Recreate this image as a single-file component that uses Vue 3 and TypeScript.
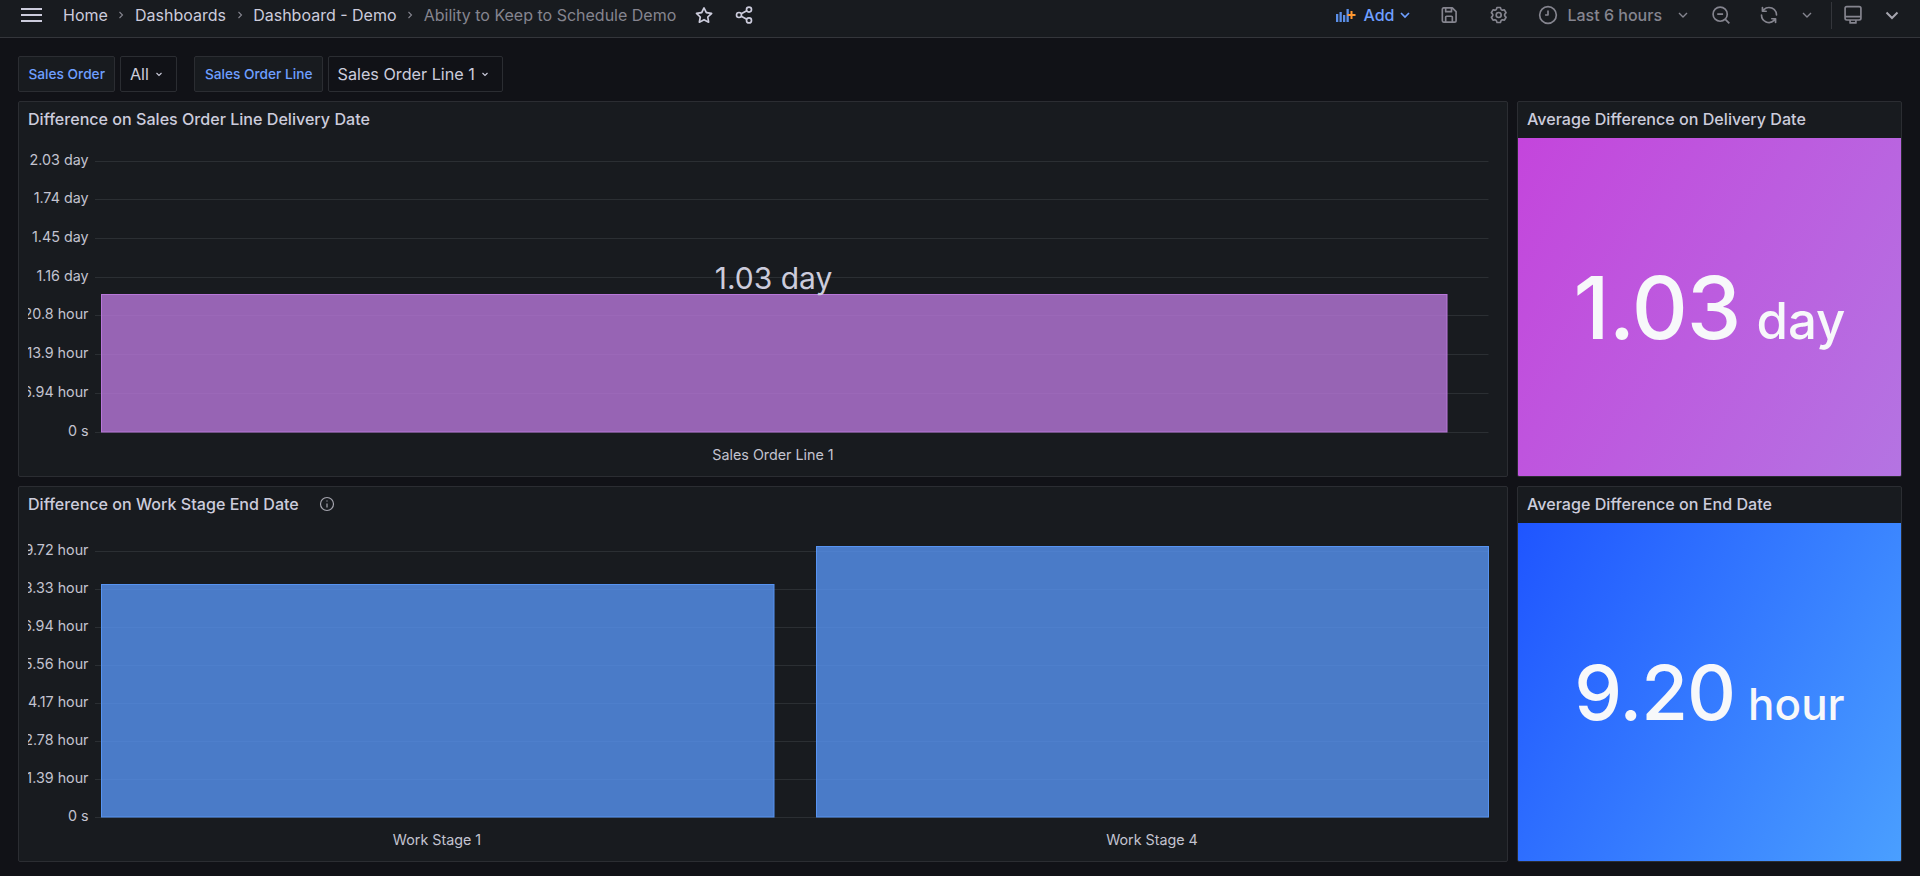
<script setup lang="ts">
interface Bar { x1: number; x2: number; top: number; label: string; center: number }
interface Chart {
  id: string; title: string; info: boolean; stroke: string; fill: string;
  top: number; ticks: { y: number; label: string }[]; bars: Bar[]; value?: string; labelY: number;
}
interface Stat { title: string; value: string; unit: string; cls: string }

const chart1: Chart = {
  id: 'clip-a', title: 'Difference on Sales Order Line Delivery Date', info: false,
  stroke: '#b877d9', fill: 'rgba(184,119,217,0.8)', top: 101, labelY: 455, value: '1.03 day',
  ticks: [
    { y: 161.5, label: '2.03 day' }, { y: 199.5, label: '1.74 day' }, { y: 238.5, label: '1.45 day' },
    { y: 277.5, label: '1.16 day' }, { y: 315.5, label: '20.8 hour' }, { y: 354.5, label: '13.9 hour' },
    { y: 393.5, label: '6.94 hour' }, { y: 432.5, label: '0 s' },
  ],
  bars: [{ x1: 101, x2: 1447.5, top: 294, label: 'Sales Order Line 1', center: 773 }],
};
const chart2: Chart = {
  id: 'clip-b', title: 'Difference on Work Stage End Date', info: true,
  stroke: '#5794f2', fill: 'rgba(87,148,242,0.8)', top: 486, labelY: 840,
  ticks: [
    { y: 551.5, label: '9.72 hour' }, { y: 589.5, label: '8.33 hour' }, { y: 627.5, label: '6.94 hour' },
    { y: 665.5, label: '5.56 hour' }, { y: 703.5, label: '4.17 hour' }, { y: 741.5, label: '2.78 hour' },
    { y: 779.5, label: '1.39 hour' }, { y: 817.5, label: '0 s' },
  ],
  bars: [
    { x1: 101, x2: 774.5, top: 584, label: 'Work Stage 1', center: 437 },
    { x1: 816, x2: 1489, top: 546, label: 'Work Stage 4', center: 1152 },
  ],
};
const rows: { chart: Chart; stat: Stat }[] = [
  { chart: chart1, stat: { title: 'Average Difference on Delivery Date', value: '1.03', unit: 'day', cls: 'purple' } },
  { chart: chart2, stat: { title: 'Average Difference on End Date', value: '9.20', unit: 'hour', cls: 'blue' } },
];
const originX = 19;
const originY = (c: Chart) => c.top + 37;
const plotHeight = 339;
const plotWidth = 1488;
</script>

<template>
  <div class="page">
    <header class="topbar">
      <div class="crumbs">
        <svg class="burger" viewBox="0 0 23 16" width="23" height="16"><path d="M1 2h21M1 8h21M1 14h21" /></svg>
        <span class="crumb first">Home</span>
        <svg class="sep" viewBox="0 0 10 10" width="10" height="10"><path d="M3.5 2 6.5 5 3.5 8" /></svg>
        <span class="crumb">Dashboards</span>
        <svg class="sep" viewBox="0 0 10 10" width="10" height="10"><path d="M3.5 2 6.5 5 3.5 8" /></svg>
        <span class="crumb">Dashboard - Demo</span>
        <svg class="sep" viewBox="0 0 10 10" width="10" height="10"><path d="M3.5 2 6.5 5 3.5 8" /></svg>
        <span class="crumb last">Ability to Keep to Schedule Demo</span>
        <svg class="icon star" viewBox="0 0 24 24" width="20" height="20"><path class="solid" d="M22,9.67A1,1,0,0,0,21.14,9l-5.69-.83L12.9,3a1,1,0,0,0-1.8,0L8.55,8.16,2.86,9a1,1,0,0,0-.81.68,1,1,0,0,0,.25,1L6.43,14.69l-1,5.73A1,1,0,0,0,6.88,21.5L12,18.81l5.1,2.68a.93.93,0,0,0,.46.12,1,1,0,0,0,.59-.19,1,1,0,0,0,.4-1l-1-5.73L22,10.69A1,1,0,0,0,22,9.67Zm-6.15,4a1,1,0,0,0-.29.88l.72,4.2-3.76-2a1.06,1.06,0,0,0-.94,0l-3.76,2,.72-4.2a1,1,0,0,0-.29-.88l-3-3,4.21-.61a1,1,0,0,0,.76-.55L12,5.7l1.88,3.82a1,1,0,0,0,.76.55l4.21.61Z" /></svg>
        <svg class="icon share" viewBox="0 0 24 24" width="20" height="20"><circle cx="6" cy="12" r="3" /><circle cx="18" cy="5.5" r="3" /><circle cx="18" cy="18.5" r="3" /><path d="M8.7 10.6 15.3 7M8.7 13.4l6.6 3.6" /></svg>
      </div>
      <div class="actions">
        <svg class="ic-add" viewBox="0 0 20 16" width="20" height="16">
          <path class="bars" d="M0 7h2.300v8H0zM3.500 5h2.300v10H3.500zM7 8h2.300v7H7zM10.500 2h2.300v13h-2.300z" />
          <path class="plus" d="M15.500 4v8M11.500 8h8" />
        </svg>
        <span class="add">Add</span>
        <svg class="chev blue-chev" viewBox="0 0 14 14" width="14" height="14"><path d="M3 5l4 4 4-4" /></svg>
        <svg class="icon muted m27" viewBox="0 0 24 24" width="20" height="20"><path d="M4 5a1.500 1.500 0 0 1 1.500-1.500H16L20.500 8v10.500a2 2 0 0 1-2 2h-13A1.500 1.500 0 0 1 4 19ZM8 3.500V8h7V3.500M8 20.500V14.500a1 1 0 0 1 1-1h6a1 1 0 0 1 1 1v6" /></svg>
        <svg class="icon mutedfill m30" viewBox="0 0 24 24" width="20" height="20"><path d="M19.9,12.66a1,1,0,0,1,0-1.32L21.18,9.9a1,1,0,0,0,.12-1.17l-2-3.46a1,1,0,0,0-1.07-.48l-1.88.38a1,1,0,0,1-1.15-.66l-.61-1.83A1,1,0,0,0,13.64,2h-4a1,1,0,0,0-1,.68L8.08,4.51a1,1,0,0,1-1.15.66L5,4.79A1,1,0,0,0,4,5.27L2,8.73A1,1,0,0,0,2.1,9.9l1.27,1.44a1,1,0,0,1,0,1.32L2.1,14.1A1,1,0,0,0,2,15.27l2,3.46a1,1,0,0,0,1.07.48l1.88-.38a1,1,0,0,1,1.15.66l.61,1.83a1,1,0,0,0,1,.68h4a1,1,0,0,0,.95-.68l.61-1.83a1,1,0,0,1,1.15-.66l1.88.38a1,1,0,0,0,1.07-.48l2-3.46a1,1,0,0,0-.12-1.17ZM18.41,14l.8.9-1.28,2.22-1.18-.24a3,3,0,0,0-3.45,2L12.92,20H10.36L10,18.86a3,3,0,0,0-3.45-2l-1.18.24L4.07,14.9l.8-.9a3,3,0,0,0,0-4l-.8-.9L5.35,6.89l1.18.24a3,3,0,0,0,3.45-2L10.36,4h2.56l.38,1.14a3,3,0,0,0,3.45,2l1.18-.24,1.28,2.22-.8.9A3,3,0,0,0,18.41,14ZM11.64,8a4,4,0,1,0,4,4A4,4,0,0,0,11.64,8Zm0,6a2,2,0,1,1,2-2A2,2,0,0,1,11.64,14Z" /></svg>
        <svg class="icon muted m29" viewBox="0 0 24 24" width="20" height="20"><circle cx="12" cy="12" r="10" /><path d="M12 6.500V12H8.500" /></svg>
        <span class="range">Last 6 hours</span>
        <svg class="chev muted m14" viewBox="0 0 14 14" width="14" height="14"><path d="M3 5l4 4 4-4" /></svg>
        <svg class="icon muted m21" viewBox="0 0 24 24" width="20" height="20"><circle cx="11" cy="11" r="8.500" /><path d="M17.200 17.200 22 22M7.500 11h7" /></svg>
        <svg class="icon mutedfill m28" viewBox="0 0 24 24" width="20" height="20"><path d="M19.91,15.51H15.38a1,1,0,0,0,0,2h2.4A8,8,0,0,1,4,12a1,1,0,0,0-2,0,10,10,0,0,0,16.88,7.23V21a1,1,0,0,0,2,0V16.5A1,1,0,0,0,19.91,15.51ZM12,2A10,10,0,0,0,5.12,4.77V3a1,1,0,0,0-2,0V7.5a1,1,0,0,0,1,1h4.5a1,1,0,0,0,0-2H6.22A8,8,0,0,1,20,12a1,1,0,0,0,2,0A10,10,0,0,0,12,2Z" /></svg>
        <svg class="chev muted m21" viewBox="0 0 14 14" width="14" height="14"><path d="M3 5l4 4 4-4" /></svg>
        <span class="divider"></span>
        <svg class="icon muted m10" viewBox="0 0 24 24" width="20" height="20"><rect x="2.500" y="2" width="19" height="16" rx="2" /><path d="M2.500 14h19M8.500 18v3.500h7V18" /></svg>
        <svg class="chev strong" viewBox="0 0 18 18" width="18" height="18"><path d="M3.500 6.500 9 12l5.500-5.500" /></svg>
      </div>
    </header>

    <main class="content">
      <div class="vars">
        <span class="var-label">Sales Order</span>
        <span class="var-value">All
          <svg class="vchev" viewBox="0 0 10 10" width="10" height="10"><path d="M2.500 4 5 6.500 7.500 4" /></svg>
        </span>
        <span class="var-label second">Sales Order Line</span>
        <span class="var-value">Sales Order Line 1
          <svg class="vchev" viewBox="0 0 10 10" width="10" height="10"><path d="M2.500 4 5 6.500 7.500 4" /></svg>
        </span>
      </div>

      <div class="grid">
        <template v-for="row in rows" :key="row.chart.id">
          <section class="panel">
            <div class="panel-head">
              <span class="panel-title">{{ row.chart.title }}</span>
              <svg v-if="row.chart.info" class="info" viewBox="0 0 16 16" width="16" height="16">
                <circle cx="8" cy="8" r="6.500" /><path d="M8 7.500v4" /><path d="M8 4.600v1" />
              </svg>
            </div>
            <svg class="plot" :width="plotWidth" :height="plotHeight" :viewBox="`0 0 ${plotWidth} ${plotHeight}`">
              <defs>
                <clipPath :id="row.chart.id"><rect x="9" y="0" width="1480" :height="plotHeight" /></clipPath>
              </defs>
              <line
                v-for="t in row.chart.ticks"
                :key="'l' + t.y"
                :x1="95 - originX"
                :x2="1488.500 - originX"
                :y1="t.y - originY(row.chart)"
                :y2="t.y - originY(row.chart)"
                class="gridline"
              />
              <rect
                v-for="bar in row.chart.bars"
                :key="bar.label"
                :x="bar.x1 + 0.5 - originX"
                :y="bar.top + 0.5 - originY(row.chart)"
                :width="bar.x2 - bar.x1 - 1"
                :height="row.chart.ticks[row.chart.ticks.length - 1].y - bar.top - 1"
                :fill="row.chart.fill"
                :stroke="row.chart.stroke"
                stroke-width="1"
              />
              <g :clip-path="`url(#${row.chart.id})`">
                <text
                  v-for="t in row.chart.ticks"
                  :key="'t' + t.y"
                  :x="88.500 - originX"
                  :y="t.y - originY(row.chart) + 3.5"
                  text-anchor="end"
                  class="tick"
                >{{ t.label }}</text>
              </g>
              <text
                v-for="bar in row.chart.bars"
                :key="'b' + bar.label"
                :x="bar.center - originX"
                :y="row.chart.labelY - originY(row.chart) + 5"
                text-anchor="middle"
                class="tick"
              >{{ bar.label }}</text>
              <text
                v-if="row.chart.value"
                :x="773.500 - originX"
                :y="289 - originY(row.chart)"
                text-anchor="middle"
                class="bar-value"
              >{{ row.chart.value }}</text>
            </svg>
          </section>

          <section class="panel">
            <div class="panel-head">
              <span class="panel-title">{{ row.stat.title }}</span>
            </div>
            <div class="stat" :class="row.stat.cls">
              <span class="stat-value">{{ row.stat.value }}</span>
              <span class="stat-unit">{{ row.stat.unit }}</span>
            </div>
          </section>
        </template>
      </div>
    </main>
  </div>
</template>

<style>
html, body { margin: 0; background: #111217; }
</style>

<style scoped>
.page {
  width: 1920px;
  height: 876px;
  overflow: hidden;
  background: #111217;
  color: #ccccdc;
  font-family: Inter, "Liberation Sans", sans-serif;
}
.topbar {
  height: 38px;
  box-sizing: border-box;
  display: flex;
  align-items: center;
  justify-content: space-between;
  background: #181b1f;
  border-bottom: 1px solid #34363b;
  padding: 0 19px 7px 20px;
}
.crumbs, .actions { display: flex; align-items: center; height: 30px; }
.burger path { stroke: #ccccdc; stroke-width: 2.200; fill: none; }
.crumb { font-size: 16px; color: #ccccdc; white-space: nowrap; }
.crumb.first { margin-left: 20px; }
.crumb.last { color: #85858f; }
.sep { margin: 0 8.600px; }
.sep path { stroke: #85858f; fill: none; stroke-width: 1.100; }
.icon { flex: none; }
.icon .solid { fill: #ccccdc; }
.star { margin-left: 18px; }
.share { margin-left: 20px; }
.share circle, .share path { fill: none; stroke: #ccccdc; stroke-width: 2; }
.ic-add .bars { fill: #5b8fe8; }
.ic-add .plus { stroke: #ff9830; stroke-width: 2; fill: none; }
.add { color: #6e9fff; font-size: 16px; margin-left: 7px; font-weight: 500; }
.chev path { fill: none; stroke-width: 1.500; stroke: #8e8e98; }
.blue-chev { margin-left: 4px; }
.blue-chev path { stroke: #6e9fff; stroke-width: 1.700; }
.muted circle, .muted path, .muted rect { fill: none; stroke: #85858f; stroke-width: 2; stroke-linejoin: round; }
.mutedfill path { fill: #85858f; }
.chev.muted path { stroke-width: 1.400; }
.m27 { margin-left: 27px; }
.m30 { margin-left: 30px; }
.m29 { margin-left: 29px; }
.m14 { margin-left: 14px; }
.m21 { margin-left: 21px; }
.m28 { margin-left: 28px; }
.m10 { margin-left: 11px; }
.range { color: #85858f; font-size: 16px; font-weight: 500; margin-left: 9px; white-space: nowrap; }
.divider { width: 1px; height: 27px; background: #34363b; margin-left: 17px; }
.strong { margin-left: 20px; }
.strong path { stroke: #a5a5ae; stroke-width: 2; }

.content { padding: 18px 18px 0; }
.vars { display: flex; align-items: stretch; height: 36px; }
.var-label, .var-value {
  box-sizing: border-box;
  display: inline-flex;
  align-items: center;
  height: 36px;
  border: 1px solid #2b2d32;
  border-radius: 2px;
  white-space: nowrap;
}
.var-label {
  background: #181b1f;
  color: #6e9fff;
  font-size: 13.700px;
  font-weight: 500;
  padding: 0 9.500px;
}
.var-label.second { margin-left: 17.500px; }
.var-value {
  background: #111217;
  color: #ccccdc;
  font-size: 16.200px;
  padding: 0 12px 0 8.500px;
  margin-left: 5px;
}
.vchev { margin-left: 5px; }
.vchev path { stroke: #ccccdc; fill: none; stroke-width: 1.100; }

.grid {
  margin-top: 9px;
  display: grid;
  grid-template-columns: 1489.500px 385px;
  grid-template-rows: 375.500px 376px;
  column-gap: 9.500px;
  row-gap: 9.500px;
}
.panel {
  box-sizing: border-box;
  background: #181b1f;
  border: 1px solid #2b2d32;
  border-radius: 2px;
  display: flex;
  flex-direction: column;
  overflow: hidden;
  min-width: 0;
}
.panel-head {
  height: 36px;
  box-sizing: border-box;
  flex: none;
  display: flex;
  align-items: center;
  padding: 0 0 2px 9px;
}
.panel-title { font-size: 16.100px; font-weight: 500; color: #ccccdc; white-space: nowrap; }
.info { margin-left: 20px; }
.info circle, .info path { fill: none; stroke: #a5a5ae; stroke-width: 1.200; }
.plot { display: block; flex: none; }
.gridline { stroke: rgba(240, 250, 255, 0.09); stroke-width: 1; }
.tick { font-size: 14.300px; fill: #c3c3d0; font-family: Inter, "Liberation Sans", sans-serif; }
.bar-value { font-size: 30px; fill: #ccccdc; font-family: Inter, "Liberation Sans", sans-serif; }
.stat {
  flex: 1;
  display: flex;
  align-items: baseline;
  justify-content: center;
  color: #f7f8fa;
  line-height: 1;
  padding-top: 125.500px;
  box-sizing: border-box;
  gap: 16px;
  font-weight: 500;
}
.stat.purple { background: linear-gradient(120deg, #c445dc, #b474e2); }
.stat.blue { background: linear-gradient(120deg, #1f55ff, #4a9fff); padding-top: 131px; gap: 13px; }
.purple .stat-value { font-size: 87px; letter-spacing: -1px; }
.purple .stat-unit { font-size: 51px; }
.blue .stat-value { font-size: 76px; letter-spacing: -1px; }
.blue .stat-unit { font-size: 44px; }
</style>
